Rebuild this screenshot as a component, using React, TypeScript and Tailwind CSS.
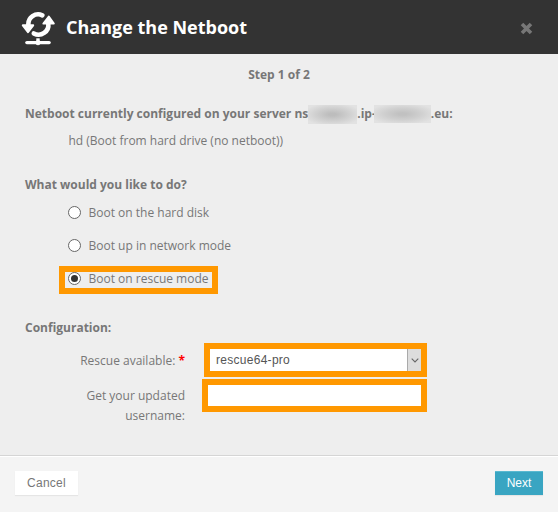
import React from "react";

function NetbootIcon() {
  return (
    <svg width="36" height="38" viewBox="0 0 36 38" fill="none" stroke="#fff" className="mt-[6px] shrink-0">
      <path d="M21.3 4.3A9.8 9.8 0 0 0 7.4 14" strokeWidth="4.6" strokeLinecap="round" />
      <path d="M12.8 22.4A9.8 9.8 0 0 0 27.3 12.5" strokeWidth="4.6" strokeLinecap="round" />
      <path d="M1.8 14.3L12.2 14.3L7 21.2Z" fill="#fff" strokeWidth="2" strokeLinejoin="round" />
      <path d="M22.4 12.6L32.8 12.6L27.8 5.6Z" fill="#fff" strokeWidth="2" strokeLinejoin="round" />
      <path d="M17 27.3V31" strokeWidth="3.4" />
      <path d="M5.8 31.6H28.2" strokeWidth="3.2" strokeLinecap="round" />
      <circle cx="17" cy="31.6" r="2.2" fill="#fff" />
    </svg>
  );
}

function Radio({ label, checked }: { label: string; checked?: boolean }) {
  return (
    <label className="flex h-4 items-center">
      <span className="mb-px flex size-[13px] shrink-0 items-center justify-center rounded-full border border-[#666] bg-white">
        {checked && <span className="size-[7px] rounded-full bg-[#333]" />}
      </span>
      <span className="ml-[7.5px] whitespace-nowrap">{label}</span>
    </label>
  );
}

export default function App() {
  return (
    <div className="flex h-[512px] w-[558px] flex-col overflow-hidden bg-[#eee] font-['Open_Sans','Noto_Sans',sans-serif] text-[12px] leading-5 text-[#777]">
      <header className="flex h-[54px] shrink-0 items-center bg-[#333] pl-[21px] pr-[25px]">
        <NetbootIcon />
        <h1 className="ml-[9px] flex-1 whitespace-nowrap text-[18px] font-bold leading-6 text-white">Change the Netboot</h1>
        <svg width="13" height="13" viewBox="0 0 13 13" stroke="#777" strokeWidth="3.6" className="mt-[2px]">
          <path d="M2 2L11 11M11 2L2 11" />
        </svg>
      </header>

      <main className="flex h-[401px] shrink-0 flex-col">
        <p className="mt-[11px] text-center font-bold">Step 1 of 2</p>
        <div className="mt-[19px] flex h-5 items-center whitespace-nowrap pl-[25px] font-bold">
          <span>Netboot currently configured on your server ns</span>
          <span className="h-[19px] w-[49px] bg-[radial-gradient(ellipse_at_center,#bdbdbd_10%,#cecece_45%,#e2e2e2_85%)]" />
          <span>.ip-</span>
          <span className="-ml-[2px] h-[18px] w-[57px] bg-[radial-gradient(ellipse_at_center,#c1c1c1_10%,#cfcfcf_45%,#e2e2e2_85%)]" />
          <span>.eu:</span>
        </div>
        <p className="mt-[7px] pl-[68.5px]">hd (Boot from hard drive (no netboot))</p>

        <h2 className="mt-6 pl-[25px] font-bold">What would you like to do?</h2>
        <div className="mt-[10px] pl-[68px]">
          <Radio label="Boot on the hard disk" />
        </div>
        <div className="mt-[17px] pl-[68px]">
          <Radio label="Boot up in network mode" />
        </div>
        <div className="ml-[59px] mt-[12px] h-7 w-[159px] shrink-0 border-6 border-[#ff9800] pl-[3px]">
          <div className="-mt-px">
            <Radio label="Boot on rescue mode" checked />
          </div>
        </div>

        <h2 className="mt-6 pl-[25px] font-bold">Configuration:</h2>
        <div className="mt-[5px] flex h-[34px] shrink-0">
          <div className="mt-2 w-[185px] text-right">
            Rescue available: <span className="font-bold text-[#f00]">*</span>
          </div>
          <div className="ml-[19px] flex w-[223px] border-6 border-[#ff9800] bg-white">
            <span className="flex-1 pl-[6px] font-['Liberation_Sans',Arial,sans-serif] text-[12px] leading-[22px] tracking-[0.28px] text-[#555]">rescue64-pro</span>
            <span className="flex w-[14px] items-center justify-center border-l border-[#aaa] bg-[#ddd]">
              <svg width="8" height="5" viewBox="0 0 8 5" fill="none" stroke="#666" strokeWidth="1.1">
                <path d="M.7 .7L4 4L7.3 .7" />
              </svg>
            </span>
          </div>
        </div>
        <div className="mt-[2px] flex shrink-0">
          <div className="mt-[7px] w-[185px] pl-16 text-right">
            Get your updated
            <br />
            username:
          </div>
          <div className="ml-[17px] h-[33px] w-[225px] border-6 border-[#ff9800] bg-white" />
        </div>
      </main>

      <footer className="flex flex-1 items-start justify-between border-t border-[#d5d5d5] bg-[#f4f4f4] px-[15px] pt-[15px] font-['Liberation_Sans',Arial,sans-serif] text-[12px] shadow-[inset_0_1px_0_#fff]">
        <button className="h-6 w-[63px] bg-white leading-6 tracking-[0.25px] shadow-[0_1px_1px_#e5e5e5]">Cancel</button>
        <button className="h-6 w-12 bg-[#39a5c2] leading-6 text-white shadow-[inset_0_1px_0_#5ab9d0,0_1px_1px_#e5e5e5]">Next</button>
      </footer>
    </div>
  );
}
